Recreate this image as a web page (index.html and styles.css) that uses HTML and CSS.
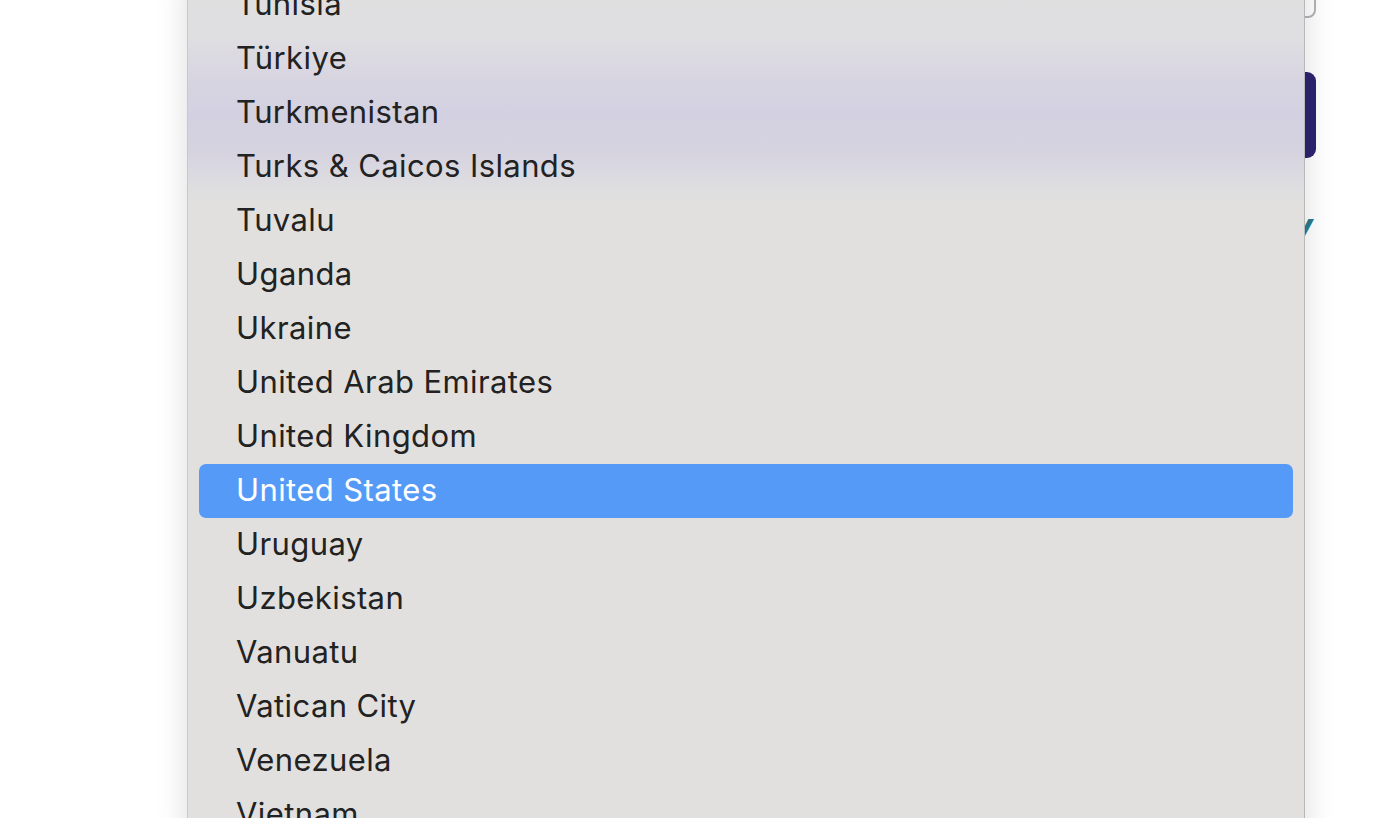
FILE: index.html
```html
<!DOCTYPE html>
<html lang="en">
<head>
  <meta charset="UTF-8">
  <title>Country picker</title>
  <link rel="stylesheet" href="styles.css">
</head>
<body>

  <div class="page">
    <div class="field"></div>
    <button class="submit" type="button">Continue</button>
    <a class="policy" href="#">Read our Privacy</a>
  </div>

  <ul class="menu">
    <li>Tunisia</li>
    <li>Türkiye</li>
    <li>Turkmenistan</li>
    <li>Turks &amp; Caicos Islands</li>
    <li>Tuvalu</li>
    <li>Uganda</li>
    <li>Ukraine</li>
    <li>United Arab Emirates</li>
    <li>United Kingdom</li>
    <li class="selected">United States</li>
    <li>Uruguay</li>
    <li>Uzbekistan</li>
    <li>Vanuatu</li>
    <li>Vatican City</li>
    <li>Venezuela</li>
    <li>Vietnam</li>
  </ul>

</body>
</html>
```

FILE: styles.css
```css
body {
  margin: 0;
  background: #fff;
  font-family: Inter, "Noto Sans", sans-serif;
  overflow: hidden;
  height: 818px;
}

.page {
  width: 1316px;
  display: flex;
  flex-direction: column;
  align-items: flex-end;
}

.field {
  width: 1100px;
  height: 40px;
  margin-top: -22px;
  border: 2px solid #b4b4b8;
  border-radius: 8px;
  box-sizing: border-box;
}

.submit {
  width: 1100px;
  height: 86px;
  margin-top: 54px;
  border: none;
  border-radius: 9px;
  background: #2d2470;
  color: #fff;
  font-size: 28px;
}

.policy {
  margin-top: 46px;
  margin-right: 3px;
  color: #2b7b8d;
  font-size: 36px;
  font-weight: 700;
  font-style: italic;
  text-decoration: none;
}

.menu {
  position: absolute;
  top: -22px;
  left: 187px;
  width: 1116px;
  margin: 0;
  padding: 0;
  list-style: none;
  border-left: 1px solid #c9c8c8;
  border-right: 1px solid #b9b8b8;
  background: linear-gradient(180deg, #e1e0e0 0px, #dfdee1 60px, #d8d5e1 100px, #d3d0e1 137px, #d6d3e0 175px, #dddce0 205px, #e1e0df 225px, #e1e0df 100%);
  box-shadow: 0 0 30px rgba(0, 0, 0, 0.14);
}

.menu li {
  height: 54px;
  margin: 0 11px;
  padding: 0 0 3px 37px;
  box-sizing: border-box;
  display: flex;
  align-items: center;
  border-radius: 7px;
  font-size: 31px;
  letter-spacing: 0.4px;
  color: #222;
}

.menu li.selected {
  background: #559af7;
  color: #fff;
}
```
